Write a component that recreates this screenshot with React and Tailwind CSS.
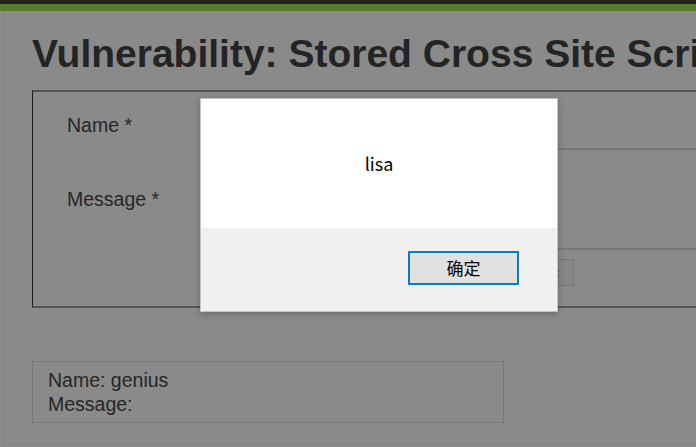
export default function App() {
  return (
    <div className="relative w-[696px] h-[447px] overflow-hidden bg-[#8b8b8b]" style={{ fontFamily: '"Liberation Sans", Arial, sans-serif' }}>
      <div className="h-[4px] bg-[#222222]" />
      <div className="h-[7px] bg-[#5c7a2c]" />
      <div className="ml-[3px] h-[433px] border-l border-b border-[#7f7f7f] bg-[#8a8a8a] pl-[28px] overflow-hidden">
        <h1 className="mt-[21px] text-[39px] leading-[44px] font-bold text-[#242424] whitespace-nowrap">
          Vulnerability: Stored Cross Site Scripting (XSS)
        </h1>
        <div className="mt-[14px] w-[800px] h-[218px] border-l border-l-[#1e1e1e] border-y-2 border-y-[#555555] pt-[13px] text-[19.5px] leading-[24px] text-[#262626]">
          <div className="flex items-center h-[40px]">
            <div className="w-[168px] pl-[34px]">Name *</div>
            <div className="w-[330px] h-[36px] border border-[#7a7a7a]" />
          </div>
          <div className="mt-[3px] flex items-center h-[102px]">
            <div className="w-[168px] pl-[34px]">Message *</div>
            <div className="flex-1 h-[102px] border-y-2 border-[#767676]" />
          </div>
          <div className="mt-[9px] flex h-[27px]">
            <div className="w-[168px]" />
            <div className="w-[210px] h-[27px] border border-[#767676] bg-[#868686]" />
            <div className="ml-[4px] w-[159px] h-[27px] border border-[#767676] bg-[#868686] flex items-center justify-end pr-[13px] text-[13px] leading-none text-[#333]">:</div>
          </div>
        </div>
        <div className="mt-[53px] w-[472px] h-[62px] border border-[#777777] pt-[6px] pl-[15px] text-[19.5px] leading-[24px] text-[#262626]">
          <div>Name: genius</div>
          <div>Message:</div>
        </div>
      </div>

      <div
        className="absolute left-[200px] top-[98px] w-[358px] h-[214px] border border-[#c4c4c4] shadow-[0_2px_6px_rgba(0,0,0,0.25)] flex flex-col"
        style={{ fontFamily: '"Noto Sans CJK SC", "Noto Sans", sans-serif' }}
      >
        <div className="h-[129px] bg-white flex items-center justify-center text-[18px] text-black">lisa</div>
        <div className="flex-1 bg-[#f0f0f0] flex justify-end items-start pt-[23px] pr-[38px]">
          <div className="w-[111px] h-[34px] border-2 border-[#0a78d4] bg-[#e1e1e1] flex items-center justify-center text-[17px] text-black">
            确定
          </div>
        </div>
      </div>
    </div>
  );
}
